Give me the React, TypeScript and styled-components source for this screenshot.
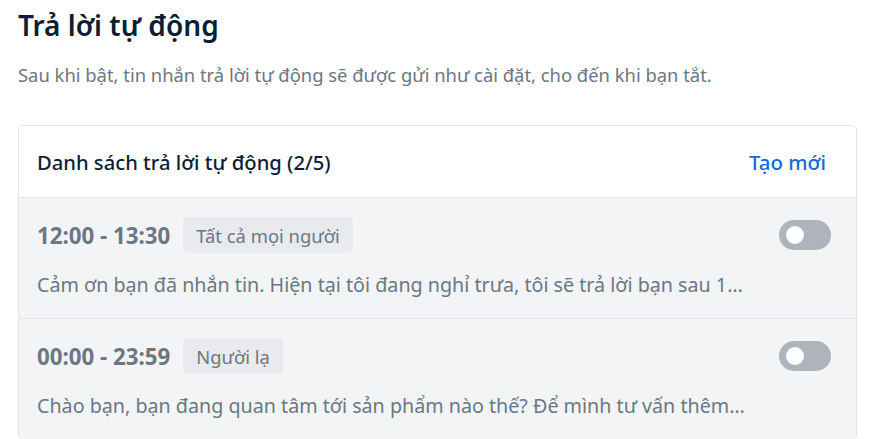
import React, { useState } from 'react';
import styled, { createGlobalStyle } from 'styled-components';

const GlobalStyle = createGlobalStyle`
  html, body {
    margin: 0;
    padding: 0;
    background: #ffffff;
  }
  body {
    font-family: "Noto Sans", "Open Sans", Arial, sans-serif;
  }
`;

const Page = styled.div`
  padding: 7px 22px 0 18px;
  width: 839px;
`;

const Title = styled.h1`
  margin: 0;
  font-size: 28px;
  line-height: 36px;
  font-weight: 600;
  color: #0b1e33;
`;

const Description = styled.p`
  margin: 19px 0 0;
  font-size: 18.4px;
  line-height: 26px;
  color: #6b7684;
`;

const Card = styled.div`
  margin-top: 37px;
  border: 1px solid #e1e4e8;
  border-radius: 5px;
  overflow: hidden;
`;

const CardHeader = styled.div`
  display: flex;
  align-items: center;
  justify-content: space-between;
  height: 71px;
  padding: 0 30px 0 18px;
  border-bottom: 1px solid #e1e4e8;
  background: #ffffff;
`;

const HeaderTitle = styled.div`
  font-size: 20.2px;
  font-weight: 500;
  color: #0b1e33;
`;

const CreateLink = styled.button`
  border: none;
  background: none;
  padding: 0;
  font-family: inherit;
  font-size: 20.4px;
  font-weight: 500;
  color: #1668dc;
  cursor: pointer;
`;

const Row = styled.div<{ $last?: boolean }>`
  display: flex;
  align-items: flex-start;
  gap: 16px;
  padding: 19px 25px 20px 18px;
  background: #f2f4f6;
  border-bottom: ${(p) => (p.$last ? 'none' : '1px solid #e1e4e8')};
`;

const RowBody = styled.div`
  flex: 1;
  min-width: 0;
  display: flex;
  flex-direction: column;
  gap: 19px;
`;

const RowHead = styled.div`
  display: flex;
  align-items: center;
  gap: 13px;
  height: 36px;
`;

const Time = styled.span`
  font-size: 22.3px;
  font-weight: 700;
  color: #6c7784;
`;

const Tag = styled.span`
  display: inline-flex;
  align-items: center;
  height: 36px;
  padding: 0 13px;
  border-radius: 5px;
  background: #e8eaed;
  font-size: 18.4px;
  color: #6c7784;
`;

const Message = styled.div`
  font-size: 19.7px;
  line-height: 26px;
  color: #6c7784;
  white-space: nowrap;
  overflow: hidden;
  text-overflow: ellipsis;
  max-width: 711px;
`;

const Switch = styled.button<{ $on: boolean }>`
  position: relative;
  flex-shrink: 0;
  width: 52px;
  height: 30px;
  margin-top: 3px;
  border: none;
  border-radius: 15px;
  padding: 0;
  background: ${(p) => (p.$on ? '#1668dc' : '#aeb4bc')};
  cursor: pointer;

  &::after {
    content: '';
    position: absolute;
    top: 6px;
    left: ${(p) => (p.$on ? '27px' : '7px')};
    width: 18px;
    height: 18px;
    border-radius: 50%;
    background: #ffffff;
  }
`;

const replies = [
  {
    time: '12:00 - 13:30',
    audience: 'Tất cả mọi người',
    message:
      'Cảm ơn bạn đã nhắn tin. Hiện tại tôi đang nghỉ trưa, tôi sẽ trả lời bạn sau 13:30 nhé. Xin cảm ơn!',
  },
  {
    time: '00:00 - 23:59',
    audience: 'Người lạ',
    message:
      'Chào bạn, bạn đang quan tâm tới sản phẩm nào thế? Để mình tư vấn thêm cho bạn nhé!',
  },
];

export default function App() {
  const [enabled, setEnabled] = useState<boolean[]>(replies.map(() => false));

  const toggle = (idx: number) =>
    setEnabled((prev) => prev.map((v, i) => (i === idx ? !v : v)));

  return (
    <Page>
      <GlobalStyle />
      <Title>Trả lời tự động</Title>
      <Description>
        Sau khi bật, tin nhắn trả lời tự động sẽ được gửi như cài đặt, cho đến khi bạn tắt.
      </Description>
      <Card>
        <CardHeader>
          <HeaderTitle>Danh sách trả lời tự động ({replies.length}/5)</HeaderTitle>
          <CreateLink>Tạo mới</CreateLink>
        </CardHeader>
        {replies.map((r, idx) => (
          <Row key={r.time} $last={idx === replies.length - 1}>
            <RowBody>
              <RowHead>
                <Time>{r.time}</Time>
                <Tag>{r.audience}</Tag>
              </RowHead>
              <Message>{r.message}</Message>
            </RowBody>
            <Switch $on={enabled[idx]} onClick={() => toggle(idx)} aria-label="toggle" />
          </Row>
        ))}
      </Card>
    </Page>
  );
}
